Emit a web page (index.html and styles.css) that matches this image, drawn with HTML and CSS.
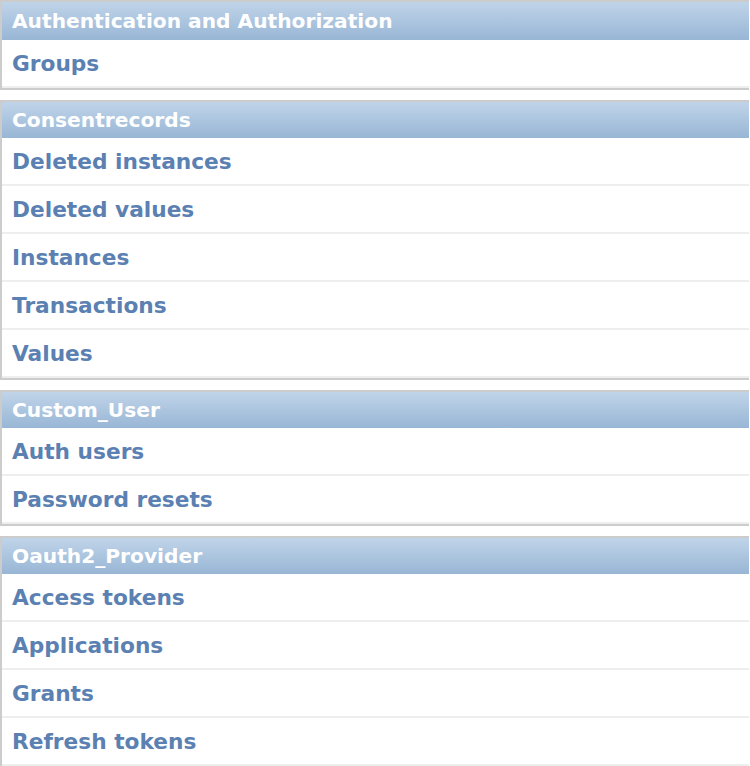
FILE: index.html
```html
<!DOCTYPE html>
<html>
<head>
<meta charset="utf-8">
<link rel="stylesheet" href="styles.css">
</head>
<body>
<div class="app-list">
  <div class="module first">
    <div class="caption">Authentication and Authorization</div>
    <a class="row" href="#">Groups</a>
  </div>
  <div class="module">
    <div class="caption">Consentrecords</div>
    <a class="row" href="#">Deleted instances</a>
    <a class="row" href="#">Deleted values</a>
    <a class="row" href="#">Instances</a>
    <a class="row" href="#">Transactions</a>
    <a class="row" href="#">Values</a>
  </div>
  <div class="module">
    <div class="caption">Custom_User</div>
    <a class="row" href="#">Auth users</a>
    <a class="row" href="#">Password resets</a>
  </div>
  <div class="module">
    <div class="caption">Oauth2_Provider</div>
    <a class="row" href="#">Access tokens</a>
    <a class="row" href="#">Applications</a>
    <a class="row" href="#">Grants</a>
    <a class="row" href="#">Refresh tokens</a>
  </div>
</div>
</body>
</html>
```

FILE: styles.css
```css
html, body {
  margin: 0;
  padding: 0;
  background: #fff;
}
body {
  font-family: "DejaVu Sans", "Liberation Sans", sans-serif;
  width: 750px;
  height: 766px;
  overflow: hidden;
}
.app-list {
  display: flex;
  flex-direction: column;
  gap: 10px;
}
.module {
  width: 749px;
  border-top: 2px solid #ccc;
  border-left: 2px solid #ccc;
  border-bottom: 2px solid #ccc;
  box-sizing: border-box;
  display: flex;
  flex-direction: column;
}
.caption {
  height: 36px;
  padding-left: 10px;
  display: flex;
  align-items: center;
  background: linear-gradient(#c0d4e9, #98b6d5);
  color: #fff;
  font-weight: bold;
  font-size: 20.2px;
}
.module.first .caption {
  height: 38px;
}
.row {
  height: 46px;
  padding-left: 10px;
  display: flex;
  align-items: center;
  border-bottom: 2px solid #eee;
  color: #5b80b2;
  text-decoration: none;
  font-weight: bold;
  font-size: 21.7px;
}
```
